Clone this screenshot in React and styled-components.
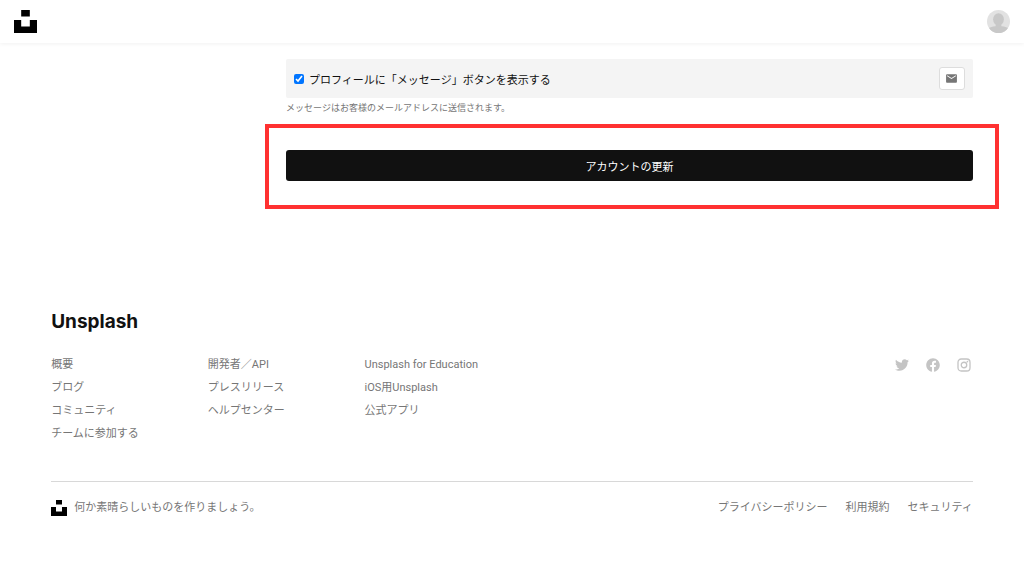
import { useState } from 'react';
import styled, { createGlobalStyle } from 'styled-components';
import { FaTwitter, FaFacebook } from 'react-icons/fa';
import { MdEmail } from 'react-icons/md';

const InstagramIcon = ({ size }) => (
  <svg
    width={size}
    height={size}
    viewBox="0 0 28 28"
    fill="none"
    stroke="currentColor"
    strokeWidth="2.600"
    aria-hidden="true"
  >
    <rect x="2" y="2" width="24" height="24" rx="6.500" />
    <circle cx="14" cy="14" r="5.500" />
    <circle cx="20.800" cy="7.200" r="1.700" fill="currentColor" stroke="none" />
  </svg>
);

const linkColumns = [
  ['概要', 'ブログ', 'コミュニティ', 'チームに参加する'],
  ['開発者／API', 'プレスリリース', 'ヘルプセンター'],
  ['Unsplash for Education', 'iOS用Unsplash', '公式アプリ'],
];

const legalLinks = ['プライバシーポリシー', '利用規約', 'セキュリティ'];

const socials = [
  { name: 'Twitter', Icon: FaTwitter },
  { name: 'Facebook', Icon: FaFacebook },
  { name: 'Instagram', Icon: InstagramIcon },
];

const Logo = ({ size }) => (
  <LogoSvg $size={size} viewBox="0 0 32 32" aria-hidden="true">
    <path d="M10 9V0h12v9H10zm12 5h10v18H0V14h10v9h12v-9z" />
  </LogoSvg>
);

const Avatar = () => (
  <AvatarSvg viewBox="0 0 32 32" aria-hidden="true">
    <clipPath id="avatar-clip">
      <circle cx="16" cy="16" r="16" />
    </clipPath>
    <g clipPath="url(#avatar-clip)">
      <rect width="32" height="32" fill="#e2e2e2" />
      <ellipse cx="16" cy="13" rx="7.500" ry="8.500" fill="#c8c8c8" />
      <path
        fill="#c8c8c8"
        d="M12 19h8v3.500c5 .3 9 1.500 12 4.500v5H0v-5c3-3 7-4.200 12-4.500V19z"
      />
    </g>
  </AvatarSvg>
);

const App = () => {
  const [showMessage, setShowMessage] = useState(true);

  return (
    <>
      <GlobalStyle />
      <Header>
        <HomeLink href="#" aria-label="Unsplash">
          <Logo size={23} />
        </HomeLink>
        <AvatarButton type="button" aria-label="アカウント">
          <Avatar />
        </AvatarButton>
      </Header>

      <Main>
        <Form onSubmit={(e) => e.preventDefault()}>
          <Option>
            <OptionLabel>
              <Checkbox
                type="checkbox"
                checked={showMessage}
                onChange={(e) => setShowMessage(e.target.checked)}
              />
              プロフィールに「メッセージ」ボタンを表示する
            </OptionLabel>
            <MailButton type="button" aria-label="メッセージ">
              <MdEmail size={13} />
            </MailButton>
          </Option>
          <Hint>メッセージはお客様のメールアドレスに送信されます。</Hint>
          <Highlight>
            <SubmitButton type="submit">アカウントの更新</SubmitButton>
          </Highlight>
        </Form>
      </Main>

      <Footer>
        <Title>Unsplash</Title>
        <FooterTop>
          {linkColumns.map((links) => (
            <LinkList key={links[0]}>
              {links.map((text) => (
                <li key={text}>
                  <FooterLink href="#">{text}</FooterLink>
                </li>
              ))}
            </LinkList>
          ))}
          <Socials>
            {socials.map(({ name, Icon }) => (
              <SocialLink key={name} href="#" aria-label={name}>
                <Icon size={14} />
              </SocialLink>
            ))}
          </Socials>
        </FooterTop>
        <FooterBottom>
          <Tagline>
            <Logo size={16} />
            何か素晴らしいものを作りましょう。
          </Tagline>
          <Legal>
            {legalLinks.map((text) => (
              <FooterLink key={text} href="#">
                {text}
              </FooterLink>
            ))}
          </Legal>
        </FooterBottom>
      </Footer>
    </>
  );
};

const GlobalStyle = createGlobalStyle`
  * {
    box-sizing: border-box;
  }
  body {
    margin: 0;
    background-color: white;
    color: #111;
    font-family: Roboto, 'Noto Sans CJK JP', sans-serif;
    font-size: 11px;
  }
  button {
    font-family: inherit;
    font-size: inherit;
    cursor: pointer;
  }
`;

const LogoSvg = styled.svg`
  display: block;
  flex: none;
  width: ${(props) => props.$size}px;
  height: ${(props) => props.$size}px;
  fill: black;
`;

const Header = styled.header`
  display: flex;
  align-items: center;
  justify-content: space-between;
  height: 43px;
  padding: 0 14px;
  box-shadow: 0 1px 4px rgba(0, 0, 0, 0.06);
`;

const HomeLink = styled.a`
  display: block;
`;

const AvatarButton = styled.button`
  padding: 0;
  border: 0;
  border-radius: 50%;
  background: none;
`;

const AvatarSvg = styled.svg`
  display: block;
  width: 23px;
  height: 23px;
`;

const Main = styled.main`
  display: grid;
  grid-template-columns: repeat(4, 1fr);
  column-gap: 18px;
  padding: 16px 5% 0;
`;

const Form = styled.form`
  grid-column: 2 / -1;
`;

const Option = styled.div`
  display: flex;
  align-items: center;
  justify-content: space-between;
  height: 39px;
  padding: 0 8px;
  border-radius: 2px;
  background-color: #f4f4f4;
`;

const OptionLabel = styled.label`
  display: flex;
  align-items: center;
  gap: 5px;
`;

const Checkbox = styled.input`
  width: 10px;
  height: 10px;
  margin: 0;
`;

const MailButton = styled.button`
  display: flex;
  align-items: center;
  justify-content: center;
  width: 26px;
  height: 23px;
  padding: 0;
  border: 1px solid #ddd;
  border-radius: 3px;
  background-color: white;
  color: #767676;
`;

const Hint = styled.p`
  margin: 0;
  color: #767676;
  font-size: 9px;
  line-height: 20px;
`;

/* frame reaches past the form column on both sides */
const Highlight = styled.div`
  margin: 6px -26px 0 -21px;
  padding: 22px 22px 24px 17px;
  border: 4px solid #ff3131;
`;

const SubmitButton = styled.button`
  display: block;
  width: 100%;
  height: 31px;
  padding: 0;
  border: 0;
  border-radius: 3px;
  background-color: #111;
  color: white;
`;

const Footer = styled.footer`
  margin-top: 99px;
  padding: 0 5% 40px;
  color: #767676;
`;

const Title = styled.h2`
  margin: 0 0 17px;
  color: #111;
  font-family: Inter, sans-serif;
  font-size: 19px;
  font-weight: 700;
  line-height: 28px;
`;

const FooterTop = styled.div`
  display: flex;
  align-items: flex-start;
`;

const LinkList = styled.ul`
  flex: 0 0 17%;
  margin: 0;
  padding: 0;
  list-style: none;
  line-height: 23px;
`;

const FooterLink = styled.a`
  color: inherit;
  text-decoration: none;
  &:hover {
    color: #111;
  }
`;

const Socials = styled.div`
  display: flex;
  align-items: center;
  gap: 17px;
  height: 23px;
  margin-left: auto;
  padding-right: 2px;
`;

const SocialLink = styled.a`
  display: flex;
  color: #c4c4c4;
`;

const FooterBottom = styled.div`
  display: flex;
  align-items: center;
  justify-content: space-between;
  margin-top: 36px;
  padding-top: 14px;
  border-top: 1px solid #d8d8d8;
  line-height: 23px;
`;

const Tagline = styled.div`
  display: flex;
  align-items: center;
  gap: 7px;
`;

const Legal = styled.nav`
  display: flex;
  gap: 18px;
`;

export default App;
